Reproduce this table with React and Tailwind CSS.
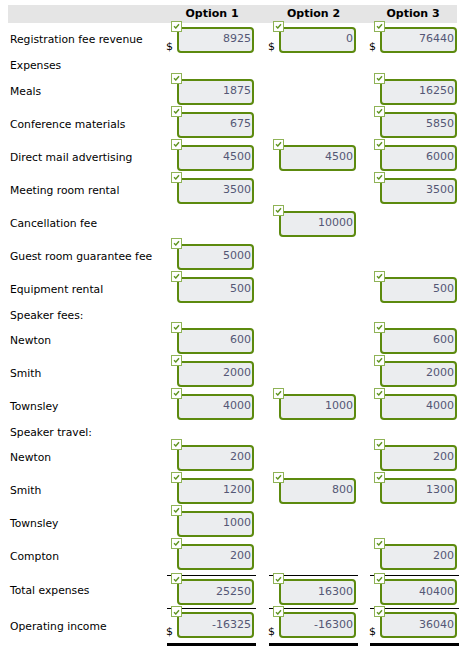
const COLS = ['w-[102px]', 'w-[101px]', 'w-[96px]']

const rows = [
  { label: 'Registration fee revenue', values: [8925, 0, 76440], dollar: true },
  { label: 'Expenses', heading: 'h-[19px]' },
  { label: 'Meals', values: [1875, null, 16250] },
  { label: 'Conference materials', values: [675, null, 5850] },
  { label: 'Direct mail advertising', values: [4500, 4500, 6000] },
  { label: 'Meeting room rental', values: [3500, null, 3500] },
  { label: 'Cancellation fee', values: [null, 10000, null] },
  { label: 'Guest room guarantee fee', values: [5000, null, null] },
  { label: 'Equipment rental', values: [500, null, 500] },
  { label: 'Speaker fees:', heading: 'h-[18px]' },
  { label: 'Newton', values: [600, null, 600] },
  { label: 'Smith', values: [2000, null, 2000] },
  { label: 'Townsley', values: [4000, 1000, 4000] },
  { label: 'Speaker travel:', heading: 'h-[18px]' },
  { label: 'Newton', values: [200, null, 200] },
  { label: 'Smith', values: [1200, 800, 1300] },
  { label: 'Townsley', values: [1000, null, null] },
  { label: 'Compton', values: [200, null, 200] },
]

function Check() {
  return (
    <span className="absolute -left-[8px] -top-[8px] flex h-[11px] w-[11px] items-center justify-center border border-[#8fb356] bg-white">
      <svg width="7" height="6" viewBox="0 0 7 6">
        <path d="M1 3.2 L2.8 5 L6 1.2" fill="none" stroke="#5f9421" strokeWidth="1.4" />
      </svg>
    </span>
  )
}

function Box({ value }) {
  return (
    <div className="relative flex h-[26px] w-[77px] items-center justify-end rounded-[4px] border-2 border-[#5c8a0e] bg-[#ebedef] pr-[1px] text-[11px] text-[#545775]">
      <Check />
      {value}
    </div>
  )
}

function Field({ value, dollar }) {
  return (
    <div className="flex items-end">
      <span className="w-[11px] pb-[1px] text-[11px] leading-none text-black">{dollar ? '$' : ''}</span>
      <Box value={value} />
    </div>
  )
}

function Label({ children, className = '' }) {
  return (
    <div className={`w-[166px] shrink-0 pl-[10px] text-[10.75px] text-black ${className}`}>{children}</div>
  )
}

export default function App() {
  return (
    <div className="w-[464px] bg-white pt-[5px]" style={{ fontFamily: '"DejaVu Sans", Verdana, sans-serif' }}>
      {/* column headers */}
      <div className="ml-[8px] flex h-[18px] w-[449px] items-center bg-[#e5e5e5] text-[11px] font-bold text-black">
        <div className="w-[158px] shrink-0" />
        <div className="w-[102px] shrink-0 pr-[10px] text-center">Option 1</div>
        <div className="w-[101px] shrink-0 pr-[10px] text-center">Option 2</div>
        <div className="w-[88px] shrink-0 text-center">Option 3</div>
      </div>

      {rows.map((row, i) =>
        row.heading ? (
          <div key={i} className={`flex items-center ${row.heading}`}>
            <Label className="pt-[2px]">{row.label}</Label>
          </div>
        ) : (
          <div key={i} className="flex h-[33px] items-center">
            <Label className="pt-[2px]">{row.label}</Label>
            {row.values.map((v, j) => (
              <div key={j} className={`${COLS[j]} shrink-0`}>
                {v !== null && <Field value={v} dollar={row.dollar} />}
              </div>
            ))}
          </div>
        )
      )}

      {/* Total expenses */}
      <div className="flex h-[35px] items-center pt-[1px]">
        <Label>Total expenses</Label>
        {[25250, 16300, 40400].map((v, j) => (
          <div key={j} className={`${COLS[j]} flex shrink-0 flex-col self-start pt-[1px]`}>
            <div className="ml-[1px] h-px w-[89px] bg-black" />
            <div className="mt-[3px]">
              <Field value={v} />
            </div>
          </div>
        ))}
      </div>

      {/* Operating income */}
      <div className="flex items-start pb-[8px]">
        <Label className="pt-[12px] leading-[13px]">Operating income</Label>
        {[-16325, -16300, 36040].map((v, j) => (
          <div key={j} className={`${COLS[j]} flex shrink-0 flex-col`}>
            <div className="ml-[1px] h-px w-[89px] bg-black" />
            <div className="mt-[3px]">
              <Field value={v} dollar />
            </div>
            <div className="ml-[1px] mt-[5px] h-[3px] w-[89px] bg-black" />
          </div>
        ))}
      </div>
    </div>
  )
}
